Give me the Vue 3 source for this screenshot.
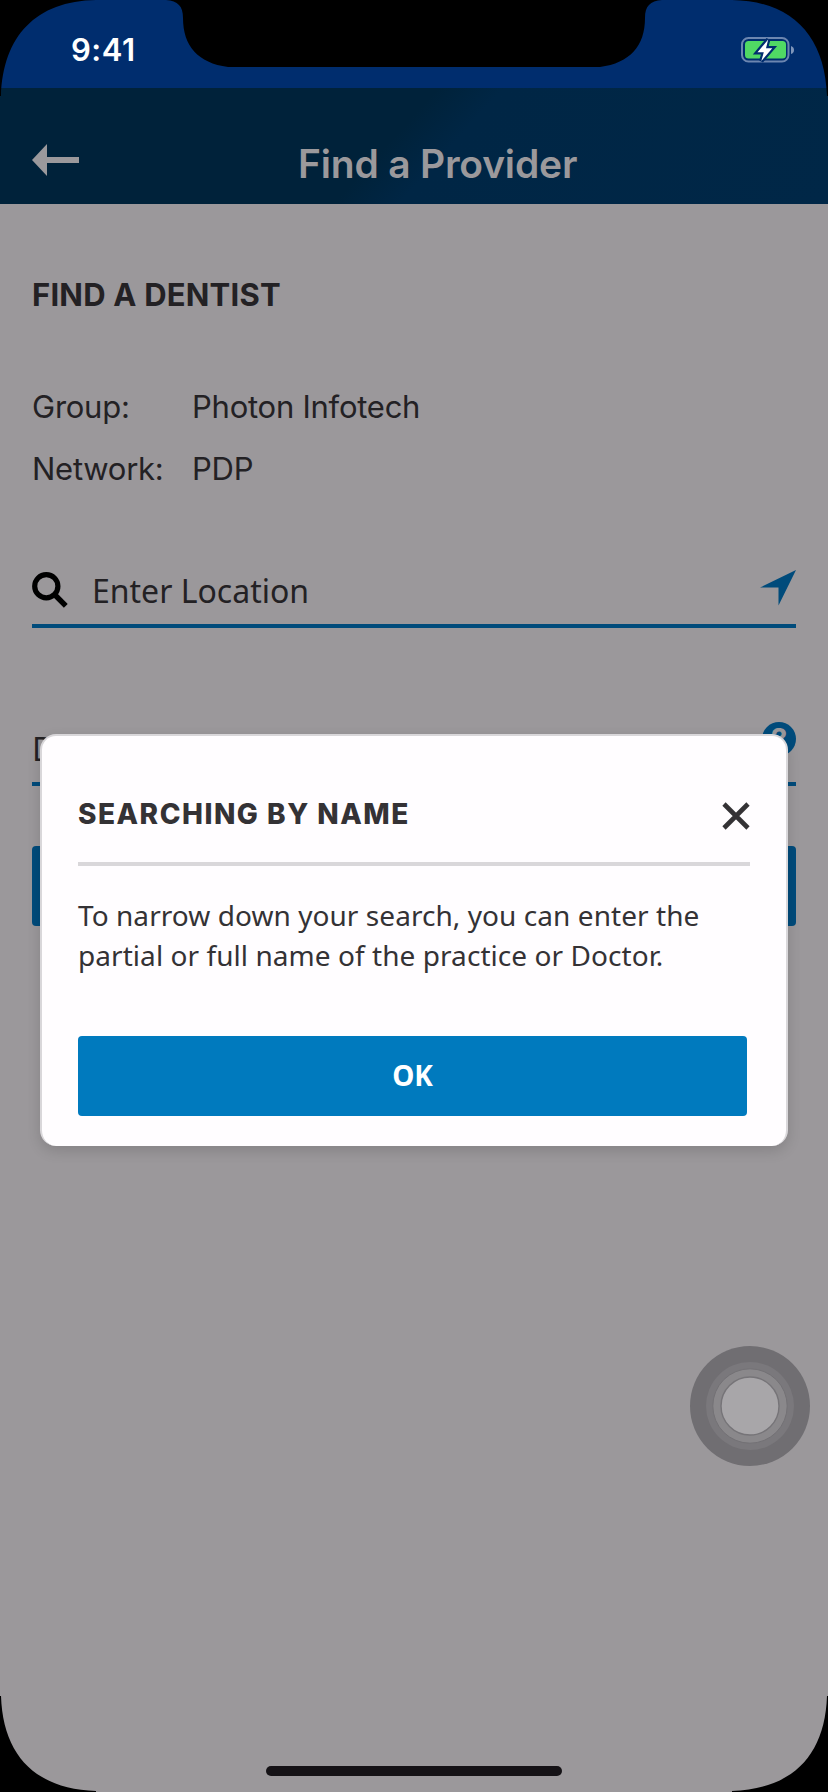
<script setup>
const details = [
  { label: 'Group:', value: 'Photon Infotech' },
  { label: 'Network:', value: 'PDP' },
]
</script>

<template>
  <div class="screen">
    <div class="status">
      <span class="time">9:41</span>
      <svg class="battery" width="56" height="30" viewBox="740 35 56 30">
        <rect x="742" y="38" width="46.5" height="23.5" rx="6.5" fill="none" stroke="#6c86b0" stroke-width="2" />
        <path d="M791 46 Q794 47 794 50 Q794 53 791 54Z" fill="#7e95ba" />
        <rect x="745" y="41" width="41" height="17.5" rx="3.5" fill="#50d964" />
        <path class="bolt" d="M768.2 39.5 L757.5 52.3 H763.8 L761.3 61 L772.3 48.3 H766Z" />
      </svg>
    </div>

    <header class="header">
      <svg class="back" width="48" height="32" viewBox="0 0 48 32">
        <path d="M0 16 L15 0 V13 H47 V19 H15 V32Z" fill="#9b999c" />
      </svg>
      <h1 class="title">Find a Provider</h1>
    </header>

    <main class="page">
      <h2 class="heading">FIND A DENTIST</h2>
      <dl class="details">
        <div v-for="d in details" :key="d.label" class="row">
          <dt>{{ d.label }}</dt>
          <dd>{{ d.value }}</dd>
        </div>
      </dl>

      <div class="field">
        <svg class="search" width="36" height="36" viewBox="0 0 36 36">
          <circle cx="14.3" cy="14.2" r="11.6" fill="none" stroke="#000" stroke-width="5.2" />
          <path d="M22.5 22.5 L33.8 33.8" stroke="#000" stroke-width="5.4" />
        </svg>
        <span class="placeholder">Enter Location</span>
        <svg class="locate" width="36" height="36" viewBox="0 0 36 36">
          <path d="M36 0 L0 17.6 H18.5 V35.5Z" fill="#004b7b" />
        </svg>
      </div>

      <div class="field second">
        <span>Doctor</span>
        <span class="help">?</span>
      </div>
      <div class="submit"></div>
    </main>

    <section class="modal" role="dialog">
      <div class="modal-head">
        <h3>SEARCHING BY NAME</h3>
        <svg width="28" height="28" viewBox="0 0 28 28">
          <path d="M2 2 L26 26 M26 2 L2 26" stroke="#343235" stroke-width="4.6" />
        </svg>
      </div>
      <p>To narrow down your search, you can enter the<br />partial or full name of the practice or Doctor.</p>
      <button type="button">OK</button>
    </section>

    <svg class="touch" width="120" height="120" viewBox="0 0 120 120">
      <circle cx="60" cy="60" r="60" fill="#706e72" />
      <circle cx="60" cy="60" r="44" fill="#7a787c" />
      <circle cx="60" cy="60" r="37.2" fill="#8a888b" stroke="#737175" stroke-width="1" />
      <circle cx="60" cy="60" r="29" fill="#a8a6a9" stroke="#767478" stroke-width="1.4" />
    </svg>
    <div class="home"></div>

    <svg class="bezel" width="828" height="1792" viewBox="0 0 828 1792">
      <path d="M0 0 H96 C36 1 3 36 1 96 H0Z" />
      <path d="M828 0 H732 C792 1 825 36 827 96 H828Z" />
      <path d="M0 1792 V1696 H1 C3 1756 36 1789 96 1791 V1792Z" />
      <path d="M828 1792 V1696 H827 C825 1756 792 1789 732 1791 V1792Z" />
      <path d="M166 0 C178 1 183 6 183 18 C183 46 198 63 228 67 H600 C630 63 645 46 645 18 C645 6 650 1 662 0Z" />
    </svg>
  </div>
</template>

<style>
body {
  margin: 0;
  background: #000;
}
</style>

<style scoped>
* {
  box-sizing: border-box;
}
.screen {
  position: relative;
  width: 828px;
  height: 1792px;
  overflow: hidden;
  background: #9b989b;
  color: #232124;
  font-family: Inter, "Liberation Sans", sans-serif;
}
.status {
  height: 88px;
  display: flex;
  justify-content: space-between;
  align-items: flex-start;
  padding: 30px 32px 0 71px;
  background: #002d6e;
}
.time {
  color: #fff;
  font-size: 31px;
  font-weight: 600;
  line-height: 40px;
  letter-spacing: 0.5px;
}
.battery {
  margin-top: 5px;
}
.bolt {
  fill: #fff;
  stroke: #002d6e;
  stroke-width: 4.4px;
  paint-order: stroke;
}
.header {
  height: 116px;
  display: flex;
  align-items: flex-start;
  padding: 56px 32px 0;
  background: linear-gradient(132deg, #00223a 0, #00223a 47%, #002645 54%, #002747 100%);
}
.title {
  margin: 0 0 0 218px;
  color: #9b999c;
  font-size: 39px;
  font-weight: 600;
  line-height: 40px;
  letter-spacing: -0.2px;
  white-space: nowrap;
}
.page {
  padding: 71px 32px 0;
}
.heading {
  margin: 0;
  font-size: 31px;
  font-weight: 700;
  line-height: 40px;
  letter-spacing: 0.2px;
}
.details {
  margin: 61px 0 0;
  font-size: 31px;
  font-weight: 400;
  line-height: 62px;
  letter-spacing: -0.25px;
}
.row {
  display: grid;
  grid-template-columns: 160px 1fr;
}
.row dd {
  margin: 0;
}
.field {
  display: flex;
  align-items: center;
  height: 72px;
  margin-top: 56px;
  border-bottom: 4px solid #004b7b;
  font-family: "Noto Sans", sans-serif;
  font-size: 32px;
}
.field.second {
  margin-top: 86px;
}
.search {
  margin-bottom: 1px;
}
.placeholder {
  margin-left: 24px;
}
.locate {
  margin: 0 0 4px auto;
}
.help {
  width: 34px;
  height: 34px;
  margin: 0 0 18px auto;
  border-radius: 50%;
  background: #004b7b;
  color: #9b989b;
  font-family: Inter, sans-serif;
  font-size: 29px;
  font-weight: 700;
  line-height: 34px;
  text-align: center;
}
.submit {
  height: 80px;
  margin-top: 60px;
  border-radius: 4px;
  background: #004b7b;
}
.modal {
  position: absolute;
  left: 40px;
  top: 734px;
  width: 748px;
  height: 412px;
  padding: 56px 36px 0;
  border: 2px solid #d9d7da;
  border-bottom: 0;
  border-radius: 16px;
  background: #fffdff;
  color: #343235;
  box-shadow: 0 5px 14px rgba(0, 0, 0, 0.14);
}
.modal-head {
  display: flex;
  justify-content: space-between;
  align-items: flex-start;
  height: 74px;
  border-bottom: 4px solid #d9d7da;
}
.modal-head h3 {
  margin: 2px 0 0;
  font-size: 28px;
  font-weight: 800;
  line-height: 40px;
  letter-spacing: 1.5px;
}
.modal-head svg {
  margin-top: 10px;
}
.modal p {
  margin: 29px 0 0;
  font-family: "Noto Sans", sans-serif;
  font-size: 28px;
  line-height: 40px;
  letter-spacing: 0.06px;
  white-space: nowrap;
}
.modal button {
  display: block;
  width: 669px;
  height: 80px;
  margin: 61px 0 0;
  padding: 0 0 2px;
  border: 0;
  border-radius: 4px;
  background: #007abe;
  color: #fff;
  font-family: "Noto Sans", sans-serif;
  font-size: 28px;
  font-weight: 700;
}
.touch {
  position: absolute;
  left: 690px;
  top: 1346px;
}
.home {
  position: absolute;
  left: 266px;
  top: 1766px;
  width: 296px;
  height: 10px;
  border-radius: 5px;
  background: #151216;
}
.bezel {
  position: absolute;
  left: 0;
  top: 0;
}
</style>
